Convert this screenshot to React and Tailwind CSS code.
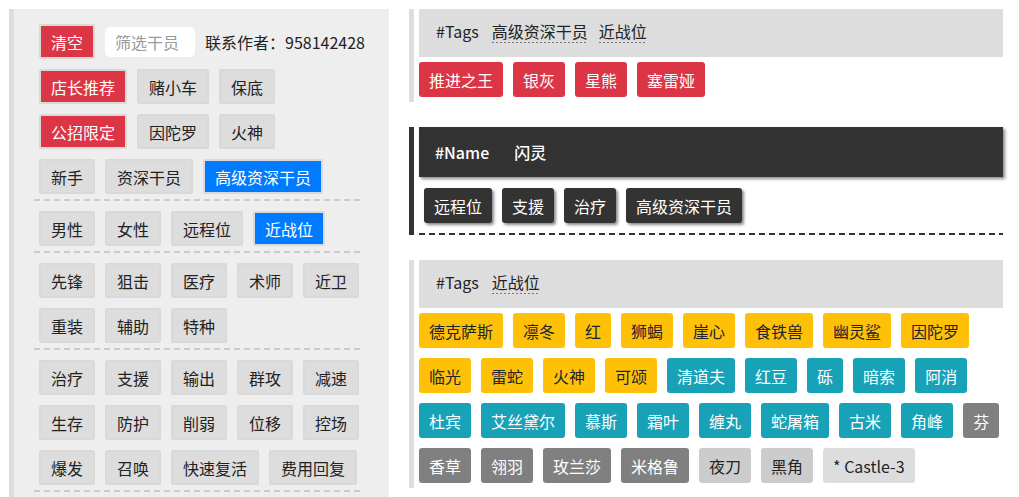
import React from "react";

const FONT = "font-['Noto_Sans_CJK_SC','Noto_Sans',sans-serif]";

function LBtn({ children, color = "gray" }) {
  const c =
    color === "red"
      ? "bg-[#dc3545] text-white"
      : color === "blue"
      ? "bg-[#007bff] text-white"
      : "bg-[#dddddd] text-[#222]";
  return (
    <div
      className={`h-[35px] shrink-0 px-[10px] border-2 border-[#d9d9d9] rounded-[2px] flex items-center justify-center text-[16px] leading-none whitespace-nowrap ${c}`}
    >
      {children}
    </div>
  );
}

function Row({ children }) {
  return <div className="flex items-center gap-[10px]">{children}</div>;
}

function Group({ rows }) {
  return (
    <div className="flex flex-col gap-[10px] p-[5px]">
      {rows.map((r, i) => (
        <Row key={i}>
          {r.map(([t, c]) => (
            <LBtn key={t} color={c}>
              {t}
            </LBtn>
          ))}
        </Row>
      ))}
    </div>
  );
}

function Dash() {
  return (
    <div className="h-[2px] mb-[5px] bg-[repeating-linear-gradient(to_right,#cccccc_0px,#cccccc_6px,transparent_6px,transparent_10px)]" />
  );
}

const TAG_COLORS = {
  red: "bg-[#dc3545] text-white",
  yellow: "bg-[#ffc107] text-[#212529]",
  teal: "bg-[#17a2b8] text-white",
  gray: "bg-[#808080] text-white",
  light: "bg-[#cccccc] text-[#212529]",
  lighter: "bg-[#dddddd] text-[#212529]",
};

function Tag({ children, color }) {
  return (
    <div
      className={`h-[35px] px-[10px] rounded-[3px] flex items-center justify-center text-[16px] leading-none whitespace-nowrap ${TAG_COLORS[color]}`}
    >
      {children}
    </div>
  );
}

function DarkBtn({ children }) {
  return (
    <div className="h-[35px] px-[10px] rounded-[3px] bg-[#333333] text-white flex items-center justify-center text-[16px] leading-none whitespace-nowrap shadow-[2px_2px_3px_#8a8a8a]">
      {children}
    </div>
  );
}

function UTag({ children, first }) {
  return (
    <div className={`${first ? "ml-[13px]" : "ml-[11px]"} flex flex-col`}>
      <span className="leading-none">{children}</span>
      <div className="mt-[3px] h-[1px] bg-[repeating-linear-gradient(to_right,#777777_0px,#777777_2px,transparent_2px,transparent_4px)]" />
    </div>
  );
}

export default function App() {
  const yellow = ["德克萨斯", "凛冬", "红", "狮蝎", "崖心", "食铁兽", "幽灵鲨", "因陀罗", "临光", "雷蛇", "火神", "可颂"];
  const teal = ["清道夫", "红豆", "砾", "暗索", "阿消", "杜宾", "艾丝黛尔", "慕斯", "霜叶", "缠丸", "蛇屠箱", "古米", "角峰"];
  const gray = ["芬", "香草", "翎羽", "玫兰莎", "米格鲁"];
  const light = ["夜刀", "黑角"];

  return (
    <div className={`${FONT} flex pl-[9px] pt-[9px] bg-white min-h-[497px] text-[#212529]`}>
      {/* left panel */}
      <div className="w-[380px] shrink-0 border-l-[5px] border-[#dddddd] bg-[#eeeeee] pl-[20px] pr-[25px] pt-[10px] pb-[40px]">
        <div className="flex flex-col gap-[10px] p-[5px]">
          <Row>
            <LBtn color="red">清空</LBtn>
            <input
              className="w-[90px] h-[30px] shrink-0 rounded-[5px] bg-white px-[10px] text-[16px] outline-none placeholder:text-[#9a9a9a]"
              placeholder="筛选干员"
            />
            <span className="text-[16px] whitespace-nowrap text-[#222]">联系作者：958142428</span>
          </Row>
          <Row>
            <LBtn color="red">店长推荐</LBtn>
            <LBtn>赌小车</LBtn>
            <LBtn>保底</LBtn>
          </Row>
          <Row>
            <LBtn color="red">公招限定</LBtn>
            <LBtn>因陀罗</LBtn>
            <LBtn>火神</LBtn>
          </Row>
          <Row>
            <LBtn>新手</LBtn>
            <LBtn>资深干员</LBtn>
            <LBtn color="blue">高级资深干员</LBtn>
          </Row>
        </div>
        <Dash />
        <Group rows={[[["男性"], ["女性"], ["远程位"], ["近战位", "blue"]]]} />
        <Dash />
        <Group
          rows={[
            [["先锋"], ["狙击"], ["医疗"], ["术师"], ["近卫"]],
            [["重装"], ["辅助"], ["特种"]],
          ]}
        />
        <Dash />
        <Group
          rows={[
            [["治疗"], ["支援"], ["输出"], ["群攻"], ["减速"]],
            [["生存"], ["防护"], ["削弱"], ["位移"], ["控场"]],
            [["爆发"], ["召唤"], ["快速复活"], ["费用回复"]],
          ]}
        />
        <Dash />
      </div>

      {/* right column */}
      <div className="ml-[20px] w-[594px] shrink-0 flex flex-col">
        {/* section 1 */}
        <div className="border-l-[5px] border-[#dddddd] pl-[5px] pb-[5px]">
          <div className="h-[48px] bg-[#dddddd] flex items-center pl-[17px] text-[16px] text-[#222]">
            <span className="leading-none mb-[4px]">#Tags</span>
            <UTag first>高级资深干员</UTag>
            <UTag>近战位</UTag>
          </div>
          <div className="mt-[5px] flex flex-wrap gap-[10px]">
            {["推进之王", "银灰", "星熊", "塞雷娅"].map((t) => (
              <Tag key={t} color="red">
                {t}
              </Tag>
            ))}
          </div>
        </div>

        {/* section 2 */}
        <div className="mt-[25px] border-l-[5px] border-[#333333] pl-[5px]">
          <div className="h-[50px] bg-[#333333] shadow-[2px_2px_3px_#8a8a8a] flex items-center pl-[16px] text-white text-[16px] font-medium">
            <span className="leading-none">#Name</span>
            <span className="leading-none ml-[25px]">闪灵</span>
          </div>
          <div className="flex gap-[10px] pl-[5px] pt-[11px] pb-[10px]">
            <DarkBtn>远程位</DarkBtn>
            <DarkBtn>支援</DarkBtn>
            <DarkBtn>治疗</DarkBtn>
            <DarkBtn>高级资深干员</DarkBtn>
          </div>
          <div className="h-[2px] bg-[repeating-linear-gradient(to_right,#333333_0px,#333333_6px,transparent_6px,transparent_10px)]" />
        </div>

        {/* section 3 */}
        <div className="mt-[25px] border-l-[5px] border-[#dddddd] pl-[5px] pb-[5px]">
          <div className="h-[48px] bg-[#dddddd] flex items-center pl-[17px] text-[16px] text-[#222]">
            <span className="leading-none mb-[4px]">#Tags</span>
            <UTag first>近战位</UTag>
          </div>
          <div className="mt-[5px] flex flex-wrap gap-[10px]">
            {yellow.map((t) => (
              <Tag key={t} color="yellow">
                {t}
              </Tag>
            ))}
            {teal.map((t) => (
              <Tag key={t} color="teal">
                {t}
              </Tag>
            ))}
            {gray.map((t) => (
              <Tag key={t} color="gray">
                {t}
              </Tag>
            ))}
            {light.map((t) => (
              <Tag key={t} color="light">
                {t}
              </Tag>
            ))}
            <Tag color="lighter">* Castle-3</Tag>
          </div>
        </div>
      </div>
    </div>
  );
}
